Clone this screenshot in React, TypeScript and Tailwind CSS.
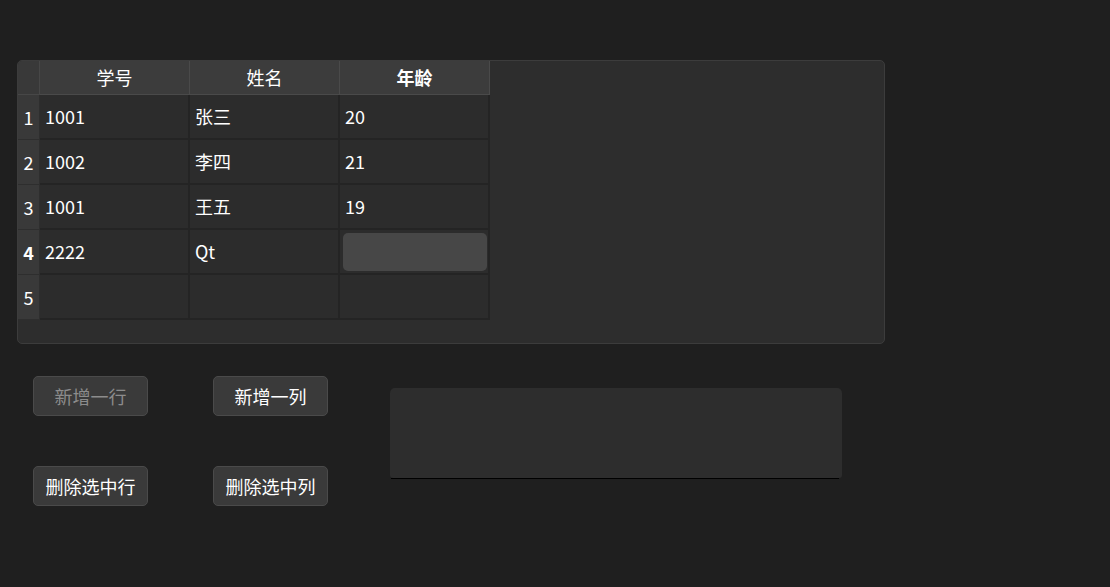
import React from "react";

const font = { fontFamily: '"Noto Sans CJK SC", "Noto Sans", sans-serif' };

const rows = [
  ["1001", "张三", "20"],
  ["1002", "李四", "21"],
  ["1001", "王五", "19"],
  ["2222", "Qt", ""],
  ["", "", ""],
];

function Btn({ children, disabled }: { children: React.ReactNode; disabled?: boolean }) {
  return (
    <div
      className={
        "w-[115px] h-[40px] flex items-center justify-center rounded-[5px] border border-[#4a4a4a] bg-[#3a3a3a] text-[18px] " +
        (disabled ? "text-[#8c8c8c]" : "text-white")
      }
    >
      {children}
    </div>
  );
}

export default function App() {
  return (
    <div className="w-[1110px] h-[587px] bg-[#1f1f1f] pt-[60px] pl-[17px] overflow-hidden" style={font}>
      <div className="w-[868px] h-[284px] rounded-[5px] border border-[#3c3c3c] bg-[#2d2d2d] overflow-hidden">
        <div className="grid grid-cols-[22px_150px_150px_150px] grid-rows-[34px_45px_45px_45px_45px_45px] w-max">
          <div className="bg-[#393939] border-r border-b border-[#474747]" />
          {["学号", "姓名", "年龄"].map((h, i) => (
            <div
              key={h}
              className={
                "bg-[#3c3c3c] border-r border-b border-[#4a4a4a] flex items-center justify-center text-[18px] text-white " +
                (i === 2 ? "font-bold" : "")
              }
            >
              {h}
            </div>
          ))}
          {rows.map((r, ri) => (
            <React.Fragment key={ri}>
              <div
                className={
                  "bg-[#393939] border-r border-b border-[#2e2e2e] flex items-center justify-center text-[18px] text-white " +
                  (ri === 3 ? "font-bold" : "")
                }
              >
                {ri + 1}
              </div>
              {r.map((c, ci) => (
                <div
                  key={ci}
                  className="bg-[#2c2c2c] border-r-2 border-b-2 border-[#242424] flex items-center pl-[5px] text-[18px] text-white"
                >
                  {ri === 3 && ci === 2 ? (
                    <div className="ml-[-2px] mt-[1px] w-[144px] h-[38px] rounded-[5px] bg-[#474747]" />
                  ) : (
                    <span className="-mt-[1px]">{c}</span>
                  )}
                </div>
              ))}
            </React.Fragment>
          ))}
        </div>
      </div>

      <div className="flex mt-[32px] pl-[16px]">
        <div className="grid grid-cols-[115px_115px] gap-x-[65px] gap-y-[50px]">
          <Btn disabled>新增一行</Btn>
          <Btn>新增一列</Btn>
          <Btn>删除选中行</Btn>
          <Btn>删除选中列</Btn>
        </div>
        <div className="ml-[62px] mt-[12px] flex flex-col">
          <div className="w-[452px] h-[90px] rounded-t-[5px] rounded-b-[3px] bg-[#2d2d2d]" />
          <div className="ml-[1px] w-[448px] h-px bg-black" />
        </div>
      </div>
    </div>
  );
}
